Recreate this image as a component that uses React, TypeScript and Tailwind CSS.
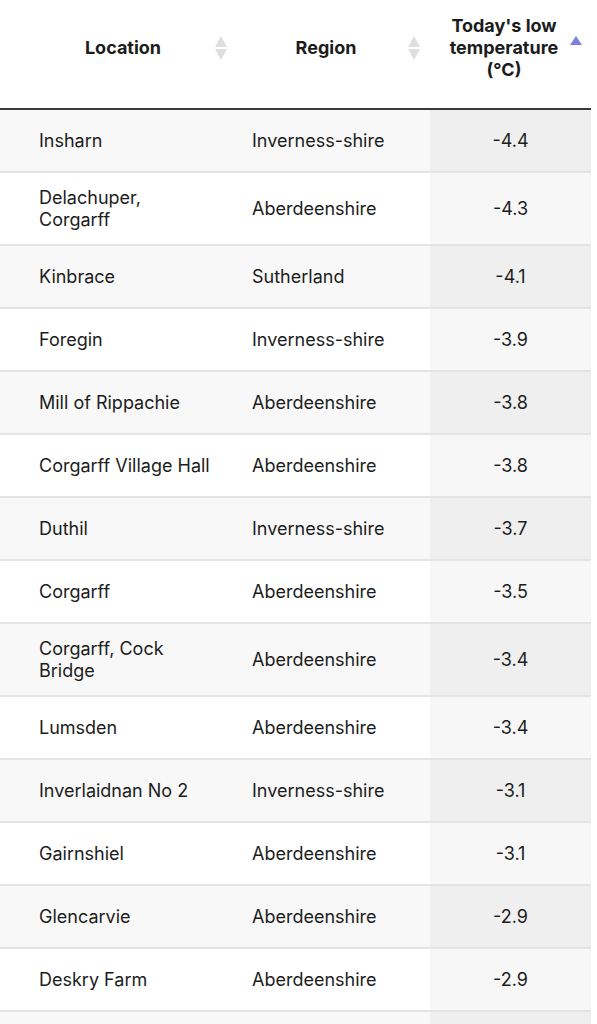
const rows: [string, string, string][] = [
  ['Insharn', 'Inverness-shire', '-4.4'],
  ['Delachuper, Corgarff', 'Aberdeenshire', '-4.3'],
  ['Kinbrace', 'Sutherland', '-4.1'],
  ['Foregin', 'Inverness-shire', '-3.9'],
  ['Mill of Rippachie', 'Aberdeenshire', '-3.8'],
  ['Corgarff Village Hall', 'Aberdeenshire', '-3.8'],
  ['Duthil', 'Inverness-shire', '-3.7'],
  ['Corgarff', 'Aberdeenshire', '-3.5'],
  ['Corgarff, Cock Bridge', 'Aberdeenshire', '-3.4'],
  ['Lumsden', 'Aberdeenshire', '-3.4'],
  ['Inverlaidnan No 2', 'Inverness-shire', '-3.1'],
  ['Gairnshiel', 'Aberdeenshire', '-3.1'],
  ['Glencarvie', 'Aberdeenshire', '-2.9'],
  ['Deskry Farm', 'Aberdeenshire', '-2.9'],
  ['Tomintoul', 'Banffshire', '-2.8'],
];

// up/down sort arrows; active shows only the blue up arrow
function SortIcon({ active }: { active?: boolean }) {
  if (active) {
    return (
      <svg width="12" height="26" viewBox="0 0 12 26" className="shrink-0 -mt-[6px]">
        <path d="M6 4 L12 13 L0 13 Z" fill="#7f7fe0" />
      </svg>
    );
  }
  return (
    <svg width="12" height="26" viewBox="0 0 12 26" className="shrink-0">
      <path d="M6 1 L12 12 L0 12 Z" fill="#dedede" />
      <path d="M6 25 L12 14 L0 14 Z" fill="#dedede" />
    </svg>
  );
}

export default function App() {
  return (
    <div className="min-h-screen bg-white text-[#1c1c1c] font-['Inter','Noto_Sans',sans-serif]">
      <div className="w-[591px]">
        {/* header */}
        <div className="grid grid-cols-[231px_199px_161px] border-b-2 border-[#3a3a3a] h-[110px] pt-[15px] pb-[29px] text-[18px] leading-[22px] font-bold">
          <div className="flex items-center pl-[39px] pr-[4px] gap-[8px]">
            <span className="flex-1 text-center">Location</span>
            <SortIcon />
          </div>
          <div className="flex items-center pl-[20px] pr-[10px] gap-[7px]">
            <span className="flex-1 text-center">Region</span>
            <SortIcon />
          </div>
          <div className="flex items-center pl-[8px] pr-[9px]">
            <span className="flex-1 text-center">Today's low temperature (°C)</span>
            <SortIcon active />
          </div>
        </div>

        {/* body */}
        {rows.map(([loc, region, temp], i) => {
          const odd = i % 2 === 0;
          return (
            <div
              key={loc}
              className={`grid grid-cols-[231px_199px_161px] border-b-2 border-[#e4e4e4] min-h-[63px] text-[18px] leading-[22px] ${odd ? 'bg-[#f8f8f8]' : 'bg-white'}`}
            >
              <div className="flex items-center pl-[39px] pr-[18px] py-[13.5px]">{loc}</div>
              <div className="flex items-center pl-[21px] pr-[6px] py-[13.5px]">{region}</div>
              <div className={`flex items-center justify-center py-[13.5px] ${odd ? 'bg-[#efefef]' : 'bg-[#f7f7f7]'}`}>{temp}</div>
            </div>
          );
        })}
      </div>
    </div>
  );
}
